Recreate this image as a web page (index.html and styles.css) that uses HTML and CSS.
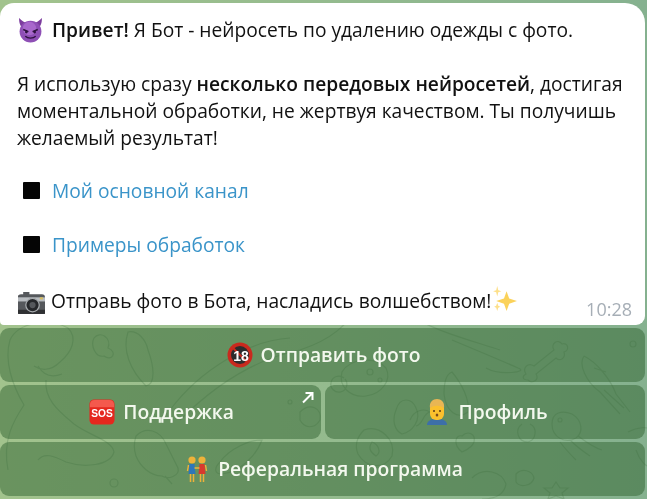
FILE: index.html
```html
<!DOCTYPE html>
<html lang="en">
<head>
    <meta charset="UTF-8">
    <meta name="viewport" content="width=device-width, initial-scale=1.0">
    <title>Бот</title>
    <link rel="stylesheet" href="styles.css">
</head>
<body>

    <div class="chat">

        <!-- Wallpaper doodles -->
        <svg class="doodles" width="647" height="499" viewBox="0 0 647 499" fill="none">
            <!-- dino -->
            <path d="M8 470C2 440 14 420 24 405C12 385 4 360 10 340C18 322 50 318 68 328C78 338 72 352 60 362C50 372 40 370 34 366M38 366C44 376 52 378 62 374M46 380C44 400 60 412 74 424C90 436 112 440 114 452C110 466 84 468 66 462C54 456 44 452 38 460"/>
            <path d="M94 338C100 330 112 338 108 348C118 352 112 362 104 356C96 358 90 346 94 338ZM128 332C122 350 130 370 146 386C156 384 154 366 148 350C146 340 138 330 128 332Z"/>
            <path d="M180 420C210 390 250 360 300 350M300 350C330 340 350 325 360 300M170 410C200 370 250 340 290 338"/>
            <!-- ice cream -->
            <path d="M136 436C146 426 160 430 166 444L178 468C180 476 168 480 162 476C150 476 140 466 136 456C134 450 134 442 136 436ZM165 476L172 484"/>
            <path d="M220 462C230 448 250 440 262 440C256 456 240 472 222 474C214 474 214 468 220 462Z"/>
            <!-- middle blobs -->
            <path d="M342 372C350 358 376 356 386 368C392 380 382 394 366 396C350 398 338 386 342 372ZM344 378A8 8 0 1 0 345 379"/>
            <circle cx="370" cy="372" r="3"/>
            <circle cx="380" cy="380" r="2"/>
            <path d="M452 340C476 350 500 360 518 368C530 372 500 376 486 368"/>
            <path d="M405 312C430 330 470 340 500 350"/>
            <!-- bone -->
            <path d="M526 374C522 368 528 362 534 366L554 350C550 344 558 338 562 344C568 342 570 350 564 352C566 358 560 362 556 358L536 374C540 380 532 384 528 380C522 380 522 376 526 374Z"/>
            <!-- shell and leaf -->
            <path d="M452 372C462 384 470 400 468 412C458 420 446 412 444 394C444 382 446 374 452 372Z"/>
            <path d="M396 410C400 396 412 398 416 408C422 420 412 432 402 434C394 430 392 420 396 410Z"/>
            <!-- squid -->
            <path d="M584 356C596 362 610 378 616 394L630 412M584 356C578 364 586 382 600 392L620 414M594 368L606 372M604 390L624 408"/>
            <!-- jellyfish -->
            <path d="M552 424C552 412 562 410 572 414C582 420 584 432 576 438C566 444 552 438 552 424ZM560 442C566 450 570 454 576 460M570 440C578 448 584 452 590 456M578 436C586 442 594 448 602 450"/>
            <circle cx="560" cy="420" r="2"/>
            <!-- heart -->
            <path d="M462 452C452 444 456 434 462 436C468 430 476 434 474 442C472 448 466 450 462 452Z"/>
            <path d="M364 430C380 424 396 440 392 456C384 470 366 468 358 454C354 444 358 436 364 430ZM372 442C378 444 382 452 376 456C370 452 368 448 372 442Z"/>
            <!-- spirals -->
            <path d="M522 424C514 430 518 442 528 442C536 440 538 428 530 424"/>
            <path d="M410 420C414 410 424 408 430 412C422 414 424 424 416 426"/>
            <!-- bottom row -->
            <path d="M472 478C484 466 502 472 506 484C504 496 494 499 482 499M516 474C522 468 532 470 534 478C532 486 520 488 516 482Z"/>
            <path d="M556 482L560 488L568 488L562 493L564 499L556 496L548 499L550 493L544 488L552 488Z"/>
            <circle cx="633" cy="344" r="3"/>
            <circle cx="114" cy="483" r="4"/>
            <circle cx="290" cy="402" r="2"/>
            <path d="M628 432C640 426 647 428 647 428M636 450C640 462 647 466 647 466"/>
            <path d="M300 412C310 402 322 408 320 420C314 430 304 428 300 420Z"/>
        </svg>

        <!-- Message -->
        <div class="bubble">
            <p class="line">
                <svg class="emoji devil" viewBox="0 0 26 26">
                    <path d="M2 2C2 7 3 10 6 12L10 7C7 6 5 5 2 2ZM24 2C24 7 23 10 20 12L16 7C19 6 21 5 24 2Z" fill="#7c3c9e"/>
                    <circle cx="13" cy="15" r="10.5" fill="#8e4fb5"/>
                    <circle cx="12" cy="12" r="6.5" fill="#a868cc"/>
                    <path d="M6 13L11 15M20 13L15 15" stroke="#2e123f" stroke-width="1.4"/>
                    <circle cx="9" cy="15.5" r="1.3" fill="#2e123f"/>
                    <circle cx="17" cy="15.5" r="1.3" fill="#2e123f"/>
                    <path d="M8 19.5C10.5 22 15.5 22 18 19.5" stroke="#2e123f" stroke-width="1.3" fill="none"/>
                </svg>
                <b>Привет!</b> Я Бот - нейросеть по удалению одежды с фото.
            </p>
            <p class="line"></p>
            <p class="line">Я использую сразу <b>несколько передовых нейросетей</b>, достигая</p>
            <p class="line">моментальной обработки, не жертвуя качеством. Ты получишь</p>
            <p class="line">желаемый результат!</p>
            <p class="line"></p>
            <p class="line link-line"><span class="square"></span><a href="#">Мой основной канал</a></p>
            <p class="line"></p>
            <p class="line link-line"><span class="square"></span><a href="#">Примеры обработок</a></p>
            <p class="line"></p>
            <p class="line">
                <svg class="emoji camera" viewBox="0 0 26 26">
                    <path d="M0 7C0 6 1 5 3 5H5V3H11V5H23C25 5 26 6 26 8V22C26 23 25 24 24 24H2C1 24 0 23 0 22Z" fill="#55585c"/>
                    <rect x="0" y="8" width="26" height="4" fill="#b8bcc0"/>
                    <rect x="0" y="20" width="26" height="4" fill="#2f3033"/>
                    <circle cx="14" cy="15.5" r="6.5" fill="#26282b" stroke="#a7abae" stroke-width="1.2"/>
                    <circle cx="14" cy="15.5" r="3" fill="#55585c"/>
                    <rect x="21" y="8" width="3" height="2" fill="#d8c060"/>
                </svg>
                Отправь фото в Бота, насладись волшебством!<svg class="emoji sparkles" viewBox="0 0 26 26">
                    <path d="M15 6L17.5 13L25 15.5L17.5 18L15 25L12.5 18L5 15.5L12.5 13Z" fill="#fbd25a"/>
                    <path d="M6 1L7 5L10 6L7 7L6 11L5 7L2 6L5 5Z" fill="#fde08a"/>
                    <path d="M6 17L7 20L9 21L7 22L6 25L5 22L3 21L5 20Z" fill="#fde08a"/>
                </svg>
            </p>
            <span class="time">10:28</span>
        </div>

        <!-- Inline keyboard -->
        <div class="keyboard">
            <div class="key wide">
                <svg class="key-emoji" viewBox="0 0 26 26">
                    <circle cx="13" cy="13" r="12.5" fill="#c9291e"/>
                    <circle cx="13" cy="13" r="9" fill="#2c2c2e"/>
                    <path d="M6 6L20 20" stroke="#c9291e" stroke-width="2"/>
                    <text x="14" y="19" text-anchor="middle" class="emoji-text">18</text>
                </svg>
                Отправить фото
            </div>
            <div class="key">
                <svg class="key-emoji" viewBox="0 0 28 28">
                    <rect x="0.5" y="0.5" width="27" height="27" rx="5" fill="#e5281e"/>
                    <path d="M1 6C1 3 3 1 6 1H22C25 1 27 3 27 6V9H1Z" fill="#f4594d"/>
                    <text x="14" y="19" text-anchor="middle" class="emoji-text sos">SOS</text>
                </svg>
                Поддержка
                <svg class="key-arrow" width="13" height="13" viewBox="0 0 13 13">
                    <path d="M2 11.5L11 2.5M4.5 2H11.5V9" stroke="#fff" stroke-width="2" fill="none"/>
                </svg>
            </div>
            <div class="key">
                <svg class="key-emoji" viewBox="0 0 26 26">
                    <path d="M3 26C3 21 8 20 13 20C18 20 23 21 23 26Z" fill="#3d6fa8"/>
                    <rect x="6" y="3" width="14" height="18" rx="6" fill="#fbc02d"/>
                    <path d="M6 9C5 3 9 0 13 0C17 0 21 3 20 9C16 6 10 6 6 9Z" fill="#e9b654"/>
                    <circle cx="10" cy="12" r="1" fill="#5d3a1a"/>
                    <circle cx="16" cy="12" r="1" fill="#5d3a1a"/>
                    <ellipse cx="13" cy="16" rx="1.3" ry="1.6" fill="#7a4a1a"/>
                </svg>
                Профиль
            </div>
            <div class="key wide">
                <svg class="key-emoji" viewBox="0 0 26 26">
                    <circle cx="8" cy="4" r="3.6" fill="#eeb23a"/>
                    <circle cx="18" cy="4" r="3.6" fill="#eeb23a"/>
                    <path d="M5.5 8H10.5L11.5 18H4.5Z" fill="#2f76b8"/>
                    <path d="M15.5 8H20.5L21.5 18H14.5Z" fill="#d83a2e"/>
                    <path d="M6.5 18V26M9.5 18V26M16.5 18V26M19.5 18V26" stroke="#eeb23a" stroke-width="1.5"/>
                    <path d="M10.5 12L15.5 12M4.5 9L3.5 15M21.5 9L22.5 15" stroke="#eeb23a" stroke-width="1.4"/>
                </svg>
                Реферальная программа
            </div>
        </div>

    </div>

</body>
</html>
```

FILE: styles.css
```css
html, body {
    margin: 0;
    padding: 0;
}
body {
    font-family: "Open Sans", Arial, sans-serif;
    background: #8fb58a;
}
.chat {
    position: relative;
    width: 647px;
    height: 499px;
    overflow: hidden;
    box-sizing: border-box;
    padding: 3px 2px 0 0;
    background: linear-gradient(to right, #a2c38d, #93ba8e 55%, #85b18f);
    filter: blur(0.35px);
}
.doodles {
    position: absolute;
    left: 0;
    top: 0;
    stroke: #4f7f4e;
    stroke-opacity: 0.3;
    stroke-width: 1.2;
}
.bubble {
    position: relative;
    height: 322px;
    box-sizing: border-box;
    padding: 12.6px 17px 0;
    background: #fff;
    border-radius: 14px 20px 9px 4px;
    color: #111;
    font-size: 19.2px;
}
.line {
    margin: 0;
    height: 27.1px;
    line-height: 27px;
    white-space: nowrap;
}
.line b {
    font-weight: 600;
}
.emoji {
    width: 27px;
    height: 27px;
    margin: -10px 3px -10px 0;
}
.devil {
    vertical-align: 4px;
    margin-right: 3px;
}
.camera {
    vertical-align: 2px;
    margin-left: 1px;
    margin-right: 1px;
}
.sparkles {
    margin: -10px 0;
    vertical-align: 6px;
}
.link-line {
    display: flex;
    align-items: center;
    padding-left: 6px;
    position: relative;
    top: -1px;
}
.square {
    width: 17px;
    height: 17px;
    margin-right: 12px;
    background: #050505;
    border-radius: 1px;
}
.line a {
    color: #3a94c9;
    text-decoration: none;
}
.time {
    position: absolute;
    right: 13px;
    bottom: 4px;
    color: #a6aeb6;
    font-size: 18px;
}
.keyboard {
    position: relative;
    display: grid;
    grid-template-columns: 321px 1fr;
    grid-auto-rows: 54px;
    column-gap: 4px;
    row-gap: 3px;
    margin-top: 3px;
}
.key {
    position: relative;
    display: flex;
    align-items: center;
    justify-content: center;
    gap: 8px;
    padding: 0 0 1px 2px;
    background: rgba(50, 100, 50, 0.5);
    border-radius: 9px;
    color: #f3f8ee;
    font-size: 19.3px;
    font-weight: 600;
}
.wide {
    grid-column: 1 / 3;
}
.key-emoji {
    width: 26px;
    height: 26px;
}
.emoji-text {
    fill: #fff;
    font-family: "Liberation Sans", Arial, sans-serif;
    font-size: 14px;
    font-weight: 700;
}
.sos {
    font-size: 11px;
}
.key-arrow {
    position: absolute;
    top: 6px;
    right: 7px;
}
```
